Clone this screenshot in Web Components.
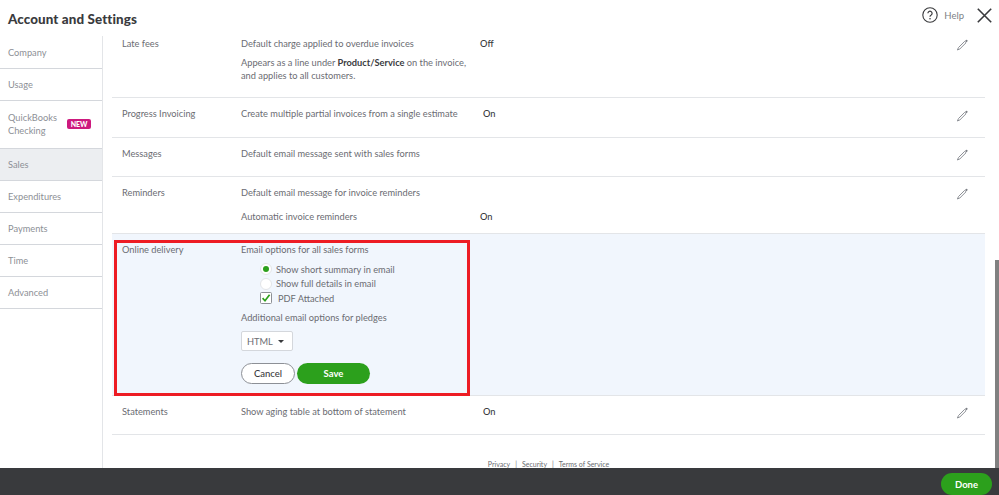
<!DOCTYPE html>
<html>
<head>
<meta charset="utf-8">
<title>Account and Settings</title>
<style>
  html, body { margin: 0; height: 100%; overflow: hidden; background: #fff; }
  body { font-family: Lato, "Open Sans", sans-serif; font-size: 9.25px; color: #6b6c72; }
</style>
</head>
<body>
<account-settings>
  <settings-nav slot="nav">
    <nav-item>Company</nav-item>
    <nav-item>Usage</nav-item>
    <nav-item badge="NEW" tall>QuickBooks<br>Checking</nav-item>
    <nav-item active>Sales</nav-item>
    <nav-item>Expenditures</nav-item>
    <nav-item>Payments</nav-item>
    <nav-item>Time</nav-item>
    <nav-item>Advanced</nav-item>
  </settings-nav>

  <settings-row label="Late fees" editable first style="height:62px">
    <setting-line value="Off">Default charge applied to overdue invoices</setting-line>
    <setting-note>Appears as a line under <b>Product/Service</b> on the invoice,<br>and applies to all customers.</setting-note>
  </settings-row>
  <settings-row label="Progress Invoicing" editable style="height:40px;--edit-top:3px">
    <setting-line value="On" style="--value-gap:242px">Create multiple partial invoices from a single estimate</setting-line>
  </settings-row>
  <settings-row label="Messages" editable style="height:39px">
    <setting-line>Default email message sent with sales forms</setting-line>
  </settings-row>
  <settings-row label="Reminders" editable style="height:57px">
    <setting-line>Default email message for invoice reminders</setting-line>
    <setting-line value="On" style="margin-top:10px">Automatic invoice reminders</setting-line>
  </settings-row>
  <settings-row label="Online delivery" open style="height:162px">
    <setting-line>Email options for all sales forms</setting-line>
    <option-list>
      <radio-option checked>Show short summary in email</radio-option>
      <radio-option>Show full details in email</radio-option>
      <check-option>PDF Attached</check-option>
    </option-list>
    <setting-line style="margin-top:6px">Additional email options for pledges</setting-line>
    <select-box>HTML</select-box>
    <form-actions></form-actions>
  </settings-row>
  <settings-row label="Statements" editable style="height:39px">
    <setting-line value="On" style="--value-gap:242px">Show aging table at bottom of statement</setting-line>
  </settings-row>
  <legal-links slot="legal"></legal-links>
</account-settings>

<script>
const PENCIL = `<svg width="12" height="12" viewBox="0 0 12 12" fill="none">
  <path d="M8.6 2.4 10 3.8 3.9 9.9 1.4 11 2.5 8.5Z" stroke="#8d9096" stroke-width="1" stroke-linejoin="round"/>
  <path d="M9 1.9 9.9 1a1 1 0 0 1 1.3 0l.1.1a1 1 0 0 1 0 1.3l-.9.9Z" fill="#7c7f85"/>
</svg>`;

// Outer shell: title bar, nav column, scrolling pane, dark footer
class AccountSettings extends HTMLElement {
  constructor() {
    super();
    this.attachShadow({mode: 'open'}).innerHTML = `<style>
      :host { display: flex; flex-direction: column; height: 495px; position: relative; }
      header { height: 36px; flex: none; display: flex; align-items: center; padding: 2px 7px 0 8px; box-sizing: border-box; }
      h1 { margin: 0; font-size: 13.4px; font-weight: 900; color: #393a3d; flex: 1; letter-spacing: .1px; margin-top: -1px; }
      .help { display: flex; align-items: center; gap: 6px; color: #7c7f85; font-size: 9.5px; margin-top: -8px; margin-right: 1px; }
      .close { margin-left: 12px; display: block; margin-top: -8px; }
      main { flex: 1; display: flex; min-height: 0; }
      .nav { width: 103px; flex: none; box-sizing: border-box; border-right: 1px solid #e3e5e8; padding-top: 1px; }
      .pane { flex: 1; min-width: 0; padding: 0 14px 0 9px; overflow: hidden; display: flex; flex-direction: column; }
      .thumb { position: absolute; right: 0; top: 260px; width: 4px; height: 208px; background: #808080; }
      footer { height: 27px; flex: none; background: #393a3d; display: flex; justify-content: flex-end; padding: 5px 7px 0 0; box-sizing: border-box; }
      .done { width: 51px; height: 22px; border-radius: 11px; background: #2ca01c; color: #fff; font-weight: 700; font-size: 9.5px; display: flex; align-items: center; justify-content: center; }
    </style>
    <header>
      <h1>Account and Settings</h1>
      <div class="help">
        <svg width="16" height="16" viewBox="0 0 16 16" fill="none">
          <circle cx="8" cy="8" r="7.2" stroke="#393a3d" stroke-width="1.1"/>
          <path d="M5.9 6.2a2.1 2.1 0 1 1 3.3 1.8c-.8.5-1.2.9-1.2 1.8" stroke="#393a3d" stroke-width="1.2" fill="none"/>
          <circle cx="8" cy="11.8" r=".8" fill="#393a3d"/>
        </svg>
        <span>Help</span>
      </div>
      <svg class="close" width="15" height="15" viewBox="0 0 15 15">
        <path d="M.8.8 14.2 14.2M14.2.8.8 14.2" stroke="#393a3d" stroke-width="1.6"/>
      </svg>
    </header>
    <main>
      <div class="nav"><slot name="nav"></slot></div>
      <div class="pane"><slot></slot><slot name="legal"></slot></div>
    </main>
    <div class="thumb"></div>
    <footer><div class="done">Done</div></footer>`;
  }
}

class SettingsNav extends HTMLElement {
  constructor() {
    super();
    this.attachShadow({mode: 'open'}).innerHTML = `<style>
      :host { display: block; }
    </style><slot></slot>`;
  }
}

class NavItem extends HTMLElement {
  constructor() {
    super();
    const badge = this.getAttribute('badge');
    this.attachShadow({mode: 'open'}).innerHTML = `<style>
      :host { display: flex; align-items: center; height: 32px; box-sizing: border-box; padding: 0 11px 1px 8px; border-bottom: 1px solid #d4d7dc; color: #8d9096; line-height: 13px; }
      :host([tall]) { height: 48px; }
      :host([active]) { background: #eceef1; }
      .label { flex: 1; }
      .badge { background: #cd1a7e; color: #fff; font-size: 7px; font-weight: 900; padding: 1px 3.5px; line-height: 8px; border-radius: 2px; }
    </style><div class="label"><slot></slot></div>${badge ? `<span class="badge">${badge}</span>` : ''}`;
  }
}

class SettingsRow extends HTMLElement {
  constructor() {
    super();
    const editable = this.hasAttribute('editable');
    this.attachShadow({mode: 'open'}).innerHTML = `<style>
      :host { display: grid; grid-template-columns: 119px 1fr auto; flex: none; box-sizing: border-box; border-bottom: 1px solid #e3e5e8; padding: 9px 17px 0 10px; position: relative; }
      :host([first]) { padding-top: 1px; }
      :host([open]) { background: #f1f6fd; }
      .label { line-height: 14px; color: #6b6c72; }
      .edit { margin-top: var(--edit-top, 2px); height: 12px; }
      .flag { position: absolute; left: 2px; top: 6px; width: 350px; height: 150px; border: 3px solid #ed1c24; pointer-events: none; }
    </style>
    <div class="label">${this.getAttribute('label')}</div>
    <div class="body"><slot></slot></div>
    ${editable ? `<div class="edit">${PENCIL}</div>` : ''}
    ${this.hasAttribute('open') ? '<div class="flag"></div>' : ''}`;
  }
}

class SettingLine extends HTMLElement {
  constructor() {
    super();
    const value = this.getAttribute('value');
    this.attachShadow({mode: 'open'}).innerHTML = `<style>
      :host { display: flex; line-height: 14px; }
      .text { width: var(--value-gap, 239px); flex: none; }
      .value { color: #393a3d; font-weight: 500; }
    </style><div class="text"><slot></slot></div>${value ? `<div class="value">${value}</div>` : ''}`;
  }
}

class SettingNote extends HTMLElement {
  constructor() {
    super();
    this.attachShadow({mode: 'open'}).innerHTML = `<style>
      :host { display: block; line-height: 13px; margin-top: 5px; }
      ::slotted(b) { color: #393a3d; font-weight: 700; }
    </style><slot></slot>`;
  }
}

class OptionList extends HTMLElement {
  constructor() {
    super();
    this.attachShadow({mode: 'open'}).innerHTML = `<style>
      :host { display: block; margin: 5px 0 0 19px; }
    </style><slot></slot>`;
  }
}

class RadioOption extends HTMLElement {
  constructor() {
    super();
    this.attachShadow({mode: 'open'}).innerHTML = `<style>
      :host { display: flex; align-items: center; height: 14.5px; gap: 4px; }
      i { width: 12px; height: 12px; border-radius: 50%; background: #fff; display: flex; align-items: center; justify-content: center; box-sizing: border-box; border: 1px solid #e3e5e8; }
      b { width: 6px; height: 6px; border-radius: 50%; background: #2ca01c; }
    </style><i>${this.hasAttribute('checked') ? '<b></b>' : ''}</i><span><slot></slot></span>`;
  }
}

class CheckOption extends HTMLElement {
  constructor() {
    super();
    this.attachShadow({mode: 'open'}).innerHTML = `<style>
      :host { display: flex; align-items: center; height: 14px; gap: 6px; }
      svg { display: block; }
    </style>
    <svg width="12" height="12" viewBox="0 0 12 12">
      <rect x=".5" y=".5" width="11" height="11" rx="1" fill="#fff" stroke="#8d9096"/>
      <path d="M2.6 6.2 5 8.8 9.6 2.8" fill="none" stroke="#2ca01c" stroke-width="1.7"/>
    </svg><span><slot></slot></span>`;
  }
}

class SelectBox extends HTMLElement {
  constructor() {
    super();
    this.attachShadow({mode: 'open'}).innerHTML = `<style>
      :host { display: flex; align-items: center; justify-content: space-between; width: 52px; height: 20px; box-sizing: border-box; margin-top: 6px; padding: 0 8px 0 5px; background: #fff; border: 1px solid #d4d7dc; border-radius: 2px; color: #6b6c72; }
      i { width: 0; height: 0; border: 3px solid transparent; border-top: 3.5px solid #393a3d; border-bottom: 0; }
    </style><slot></slot><i></i>`;
  }
}

class FormActions extends HTMLElement {
  constructor() {
    super();
    this.attachShadow({mode: 'open'}).innerHTML = `<style>
      :host { display: flex; gap: 2px; margin-top: 12px; }
      div { height: 21px; border-radius: 11px; display: flex; align-items: center; justify-content: center; box-sizing: border-box; font-size: 9.5px; }
      .cancel { width: 54px; border: 1px solid #8d9096; color: #393a3d; background: #fff; font-weight: 500; }
      .save { width: 73px; background: #2ca01c; color: #fff; font-weight: 700; }
    </style><div class="cancel">Cancel</div><div class="save">Save</div>`;
  }
}

class LegalLinks extends HTMLElement {
  constructor() {
    super();
    this.attachShadow({mode: 'open'}).innerHTML = `<style>
      :host { display: flex; justify-content: center; gap: 5px; margin-top: 25px; font-size: 7px; line-height: 9px; color: #6b6c72; }
    </style><span>Privacy</span><span>|</span><span>Security</span><span>|</span><span>Terms of Service</span>`;
  }
}

customElements.define('account-settings', AccountSettings);
customElements.define('settings-nav', SettingsNav);
customElements.define('nav-item', NavItem);
customElements.define('settings-row', SettingsRow);
customElements.define('setting-line', SettingLine);
customElements.define('setting-note', SettingNote);
customElements.define('option-list', OptionList);
customElements.define('radio-option', RadioOption);
customElements.define('check-option', CheckOption);
customElements.define('select-box', SelectBox);
customElements.define('form-actions', FormActions);
customElements.define('legal-links', LegalLinks);
</script>
</body>
</html>
